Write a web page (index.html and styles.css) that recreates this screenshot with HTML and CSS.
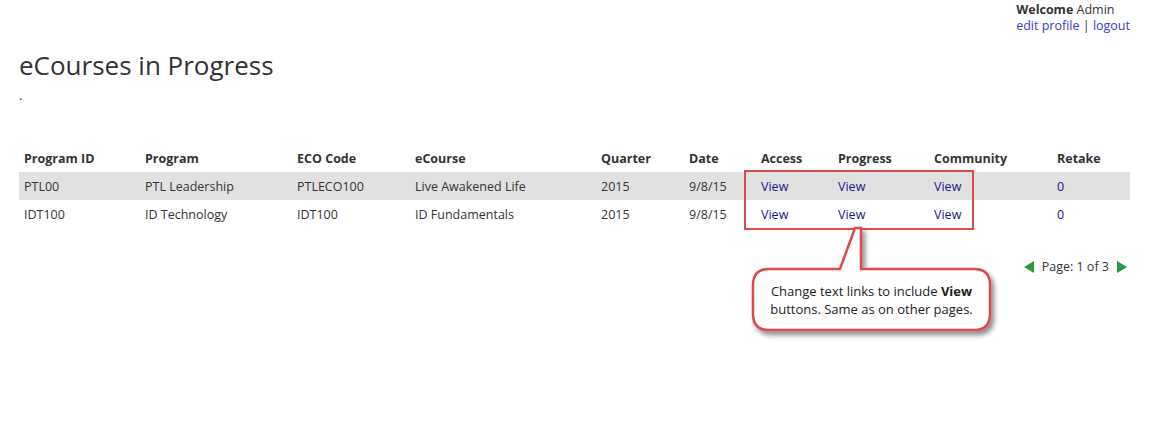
FILE: index.html
```html
<!DOCTYPE html>
<html>
<head>
<meta charset="utf-8">
<link rel="stylesheet" href="styles.css">
</head>
<body>
<div class="page">
  <div class="userbar">
    <div class="userbox">
      <div><b>Welcome</b> Admin</div>
      <div><a href="#">edit profile</a> | <a href="#">logout</a></div>
    </div>
  </div>
  <h1 class="title">eCourses in Progress</h1>
  <div class="dot">.</div>
  <div class="tablewrap">
    <table class="grid">
      <colgroup>
        <col style="width:121px"><col style="width:152px"><col style="width:118px"><col style="width:186px"><col style="width:88px"><col style="width:72px"><col style="width:77px"><col style="width:96px"><col style="width:123px"><col style="width:78px">
      </colgroup>
      <thead>
        <tr><th>Program ID</th><th>Program</th><th>ECO Code</th><th>eCourse</th><th>Quarter</th><th>Date</th><th>Access</th><th>Progress</th><th>Community</th><th>Retake</th></tr>
      </thead>
      <tbody>
        <tr class="alt"><td>PTL00</td><td>PTL Leadership</td><td>PTLECO100</td><td>Live Awakened Life</td><td>2015</td><td>9/8/15</td><td><a href="#">View</a></td><td><a href="#">View</a></td><td><a href="#">View</a></td><td><a href="#">0</a></td></tr>
        <tr><td>IDT100</td><td>ID Technology</td><td>IDT100</td><td>ID Fundamentals</td><td>2015</td><td>9/8/15</td><td><a href="#">View</a></td><td><a href="#">View</a></td><td><a href="#">View</a></td><td><a href="#">0</a></td></tr>
      </tbody>
    </table>
    <div class="pager">
      <span class="arrow left"></span>
      <span>Page: 1 of 3</span>
      <span class="arrow right"></span>
    </div>
  </div>
  <div class="hl-box"></div>
  <div class="callout">
    <svg class="callout-shape" width="270" height="130" viewBox="0 0 270 130">
      <defs>
        <filter id="sh" x="-20%" y="-20%" width="140%" height="150%">
          <feGaussianBlur in="SourceAlpha" stdDeviation="2.5"/>
          <feOffset dx="3" dy="4" result="b"/>
          <feComponentTransfer><feFuncA type="linear" slope="0.45"/></feComponentTransfer>
          <feMerge><feMergeNode/><feMergeNode in="SourceGraphic"/></feMerge>
        </filter>
      </defs>
      <path filter="url(#sh)" d="M25 50 L96 50 L111 9 L117 9 L117 50 L230 50 Q246 50 246 66 L246 95 Q246 111 230 111 L25 111 Q9 111 9 95 L9 66 Q9 50 25 50 Z" fill="#fff" stroke="#e04848" stroke-width="2.5" stroke-linejoin="round"/>
    </svg>
    <div class="callout-text">Change text links to include <b>View</b><br>buttons. Same as on other pages.</div>
  </div>
</div>
</body>
</html>
```
FILE: styles.css
```css
html, body {
  margin: 0;
  padding: 0;
  background: #fff;
}
body {
  font-family: "Open Sans", "Liberation Sans", sans-serif;
  font-size: 12.5px;
  color: #333;
}
a {
  text-decoration: none;
}
.page {
  position: relative;
  width: 1157px;
  height: 433px;
}
.userbar {
  display: flex;
  justify-content: flex-end;
  padding: 2px 27px 0 0;
  height: 33px;
}
.userbox {
  white-space: nowrap;
  line-height: 16px;
  color: #333;
  font-size: 12.5px;
}
.userbox b {
  font-weight: 700;
}
.userbox a {
  color: #3b3bc8;
}
.title {
  margin: 15px 0 0 0;
  padding-left: 19px;
  font-size: 26px;
  font-weight: 400;
  line-height: 30px;
  color: #333;
}
.dot {
  padding-left: 19px;
  line-height: 12px;
  height: 12px;
  margin-top: 10px;
}
.tablewrap {
  margin: 43px 27px 0 19px;
}
.grid {
  border-collapse: collapse;
  table-layout: fixed;
  width: 1111px;
}
.grid th {
  text-align: left;
  font-weight: 700;
  height: 27px;
  padding: 0 0 0 5px;
  vertical-align: middle;
  color: #333;
}
.grid td {
  height: 28px;
  padding: 0 0 0 5px;
  vertical-align: middle;
  color: #333;
}
.grid tr.alt td {
  background: #e1e1e1;
}
.grid a {
  color: #15158f;
}
.pager {
  display: flex;
  justify-content: flex-end;
  align-items: center;
  gap: 8px;
  margin-top: 30px;
  padding-right: 3px;
  color: #333;
}
.arrow {
  width: 0;
  height: 0;
  border-top: 6px solid transparent;
  border-bottom: 6px solid transparent;
}
.arrow.left {
  border-right: 10px solid #2a9a3e;
}
.arrow.right {
  border-left: 10px solid #2a9a3e;
}
.hl-box {
  position: absolute;
  left: 744px;
  top: 170px;
  width: 226px;
  height: 56px;
  border: 2px solid #e04848;
}
.callout {
  position: absolute;
  left: 744px;
  top: 219px;
  width: 270px;
  height: 130px;
}
.callout-shape {
  position: absolute;
  left: 0;
  top: 0;
}
.callout-text {
  position: absolute;
  left: 9px;
  top: 63px;
  width: 237px;
  text-align: center;
  font-size: 13px;
  line-height: 18px;
  color: #222;
}
.callout-text b {
  font-weight: 700;
}
```
